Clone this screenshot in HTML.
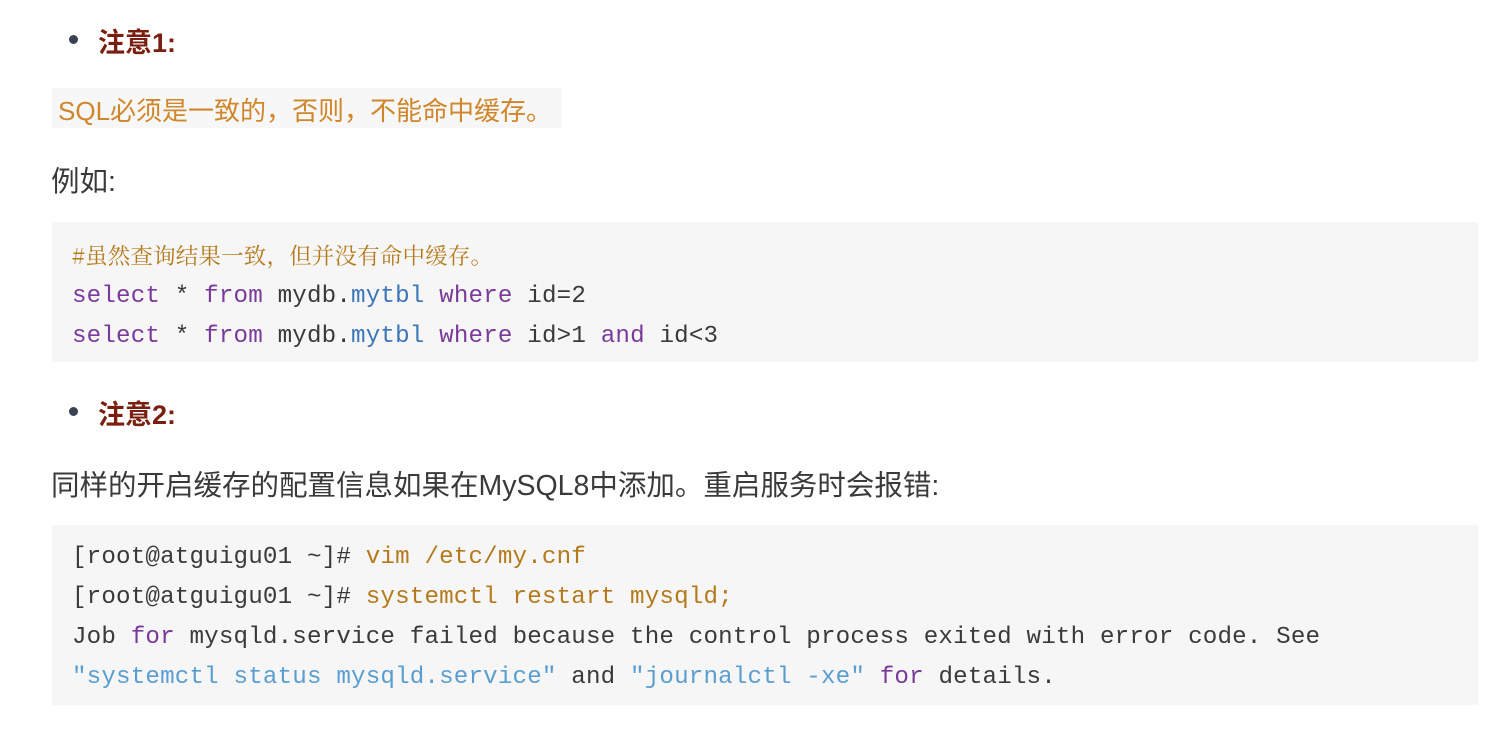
<!DOCTYPE html>
<html><head><meta charset="utf-8"><style>
body{margin:0;width:1510px;height:730px;background:#fff;position:relative;overflow:hidden;font-family:"Liberation Sans","Noto Sans CJK SC",sans-serif;color:#333}
.a{position:absolute;white-space:pre}
.dot{position:absolute;width:9px;height:9px;border-radius:50%;background:#3b4252}
.h{font-weight:bold;color:#7a1f10;font-size:27px}
.p{font-size:28.5px;color:#3a3a3a}
.code{position:absolute;left:52px;width:1426px;background:#f6f6f6}
.m{font-family:"Liberation Mono","Noto Sans CJK SC",monospace;font-size:24.2px;letter-spacing:0.17px;color:#3a3a3a}
.k{color:#7a3a9a}.b{color:#3b76b8}.o{color:#b57a1c}.s{color:#5a9ed0}
</style></head><body>
<div class="dot" style="left:69px;top:35px"></div>
<div class="a h" style="left:98px;top:21px">注意1:</div>
<div class="a" style="left:52px;top:88px;width:510px;height:40px;background:#f7f7f7"></div>
<div class="a" style="left:58px;top:91px;font-size:26px;color:#d0862b">SQL必须是一致的，否则，不能命中缓存。</div>
<div class="a p" style="left:51px;top:159px">例如:</div>
<div class="code" style="top:222px;height:140px"></div>
<div class="a m o" style="left:72px;top:239px;font-family:'Noto Serif CJK SC',serif;font-size:22.5px">#虽然查询结果一致，但并没有命中缓存。</div>
<div class="a m" style="left:72px;top:283px"><span class="k">select</span> * <span class="k">from</span> mydb.<span class="b">mytbl</span> <span class="k">where</span> id=2</div>
<div class="a m" style="left:72px;top:323px"><span class="k">select</span> * <span class="k">from</span> mydb.<span class="b">mytbl</span> <span class="k">where</span> id&gt;1 <span class="k">and</span> id&lt;3</div>
<div class="dot" style="left:69px;top:407px"></div>
<div class="a h" style="left:98px;top:393px">注意2:</div>
<div class="a p" style="left:51px;top:463px">同样的开启缓存的配置信息如果在MySQL8中添加。重启服务时会报错:</div>
<div class="code" style="top:525px;height:180px"></div>
<div class="a m" style="left:72px;top:544px">[root@atguigu01 ~]# <span class="o">vim /etc/my.cnf</span></div>
<div class="a m" style="left:72px;top:584px">[root@atguigu01 ~]# <span class="o">systemctl restart mysqld;</span></div>
<div class="a m" style="left:72px;top:624px">Job <span class="k">for</span> mysqld.service failed because the control process exited with error code. See</div>
<div class="a m" style="left:72px;top:664px"><span class="s">"systemctl status mysqld.service"</span> and <span class="s">"journalctl -xe"</span> <span class="k">for</span> details.</div>
</body></html>
